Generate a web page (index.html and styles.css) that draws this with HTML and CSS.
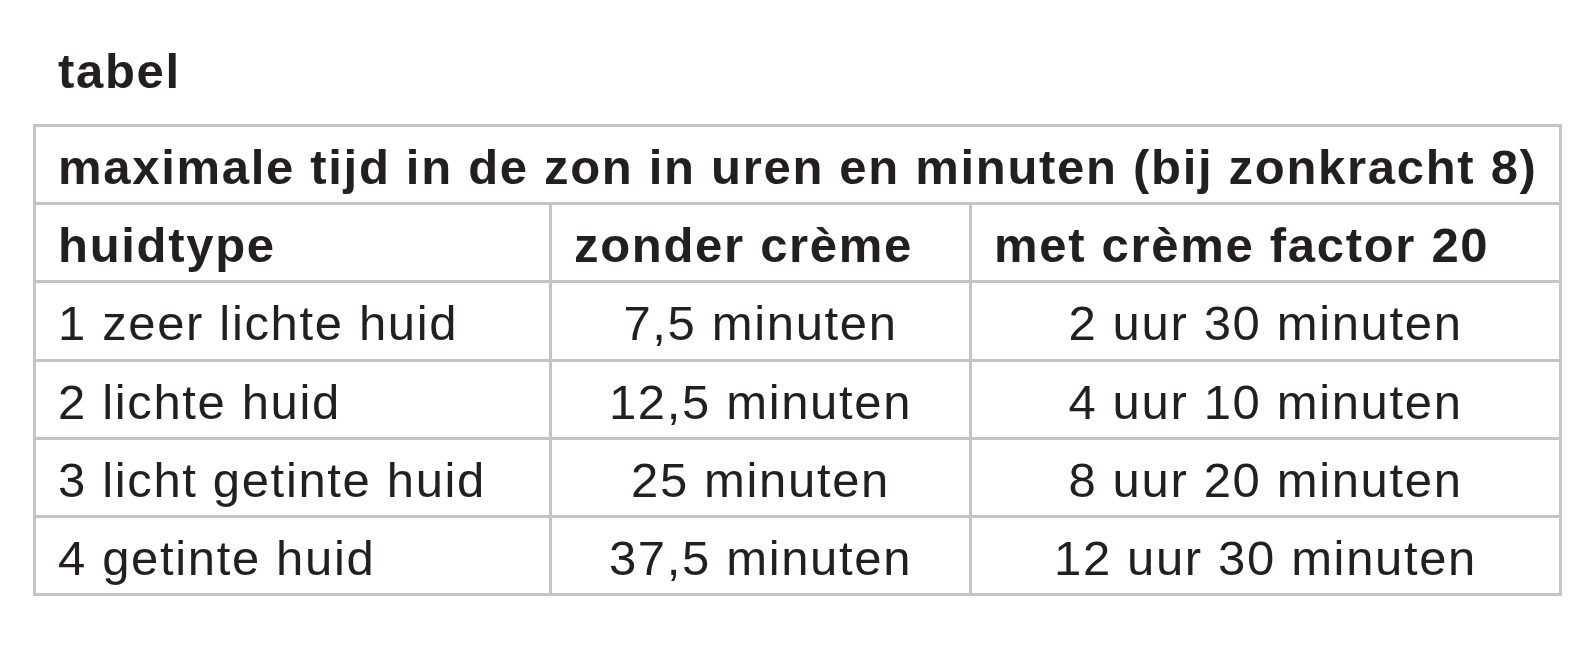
FILE: index.html
```html
<!DOCTYPE html>
<html lang="nl">
<head>
<meta charset="utf-8">
<title>tabel</title>
<link rel="stylesheet" href="styles.css">
</head>
<body>
<main class="page">
  <h1 class="title">tabel</h1>
  <table class="sun-table">
    <colgroup>
      <col class="col-type">
      <col class="col-without">
      <col class="col-with">
    </colgroup>
    <thead>
      <tr>
        <th class="cell head" colspan="3">maximale tijd in de zon in uren en minuten (bij zonkracht 8)</th>
      </tr>
      <tr>
        <th class="cell head">huidtype</th>
        <th class="cell head">zonder crème</th>
        <th class="cell head">met crème factor 20</th>
      </tr>
    </thead>
    <tbody>
      <tr>
        <td class="cell">1 zeer lichte huid</td>
        <td class="cell center">7,5 minuten</td>
        <td class="cell center">2 uur 30 minuten</td>
      </tr>
      <tr>
        <td class="cell">2 lichte huid</td>
        <td class="cell center">12,5 minuten</td>
        <td class="cell center">4 uur 10 minuten</td>
      </tr>
      <tr>
        <td class="cell">3 licht getinte huid</td>
        <td class="cell center">25 minuten</td>
        <td class="cell center">8 uur 20 minuten</td>
      </tr>
      <tr>
        <td class="cell">4 getinte huid</td>
        <td class="cell center">37,5 minuten</td>
        <td class="cell center">12 uur 30 minuten</td>
      </tr>
    </tbody>
  </table>
</main>
</body>
</html>
```

FILE: styles.css
```css
html, body {
  margin: 0;
  padding: 0;
  background: #ffffff;
}

.page {
  padding: 43px 0 0 33px;
  font-family: "Liberation Sans", Arial, sans-serif;
  color: #231f20;
  font-size: 49px;
  letter-spacing: 1.65px;
}

.title {
  margin: 0 0 25px 0;
  padding-left: 25px;
  font-size: 49px;
  line-height: 56px;
  font-weight: bold;
  letter-spacing: 1.7px;
}

.sun-table {
  table-layout: fixed;
  width: 1529px;
  border-collapse: separate;
  border-spacing: 0;
  border-top: 3px solid #c4c4c4;
  border-left: 3px solid #c4c4c4;
}

.col-type { width: 516px; }
.col-without { width: 420px; }
.col-with { width: 590px; }

.cell {
  border-right: 3px solid #c4c4c4;
  border-bottom: 3px solid #c4c4c4;
  padding: 6px 0 0 22px;
  line-height: 69.2px;
  text-align: left;
  vertical-align: top;
  white-space: nowrap;
  font-weight: normal;
}

.head {
  font-weight: bold;
  letter-spacing: 1.7px;
}

.center {
  text-align: center;
  padding-left: 0;
}
```
